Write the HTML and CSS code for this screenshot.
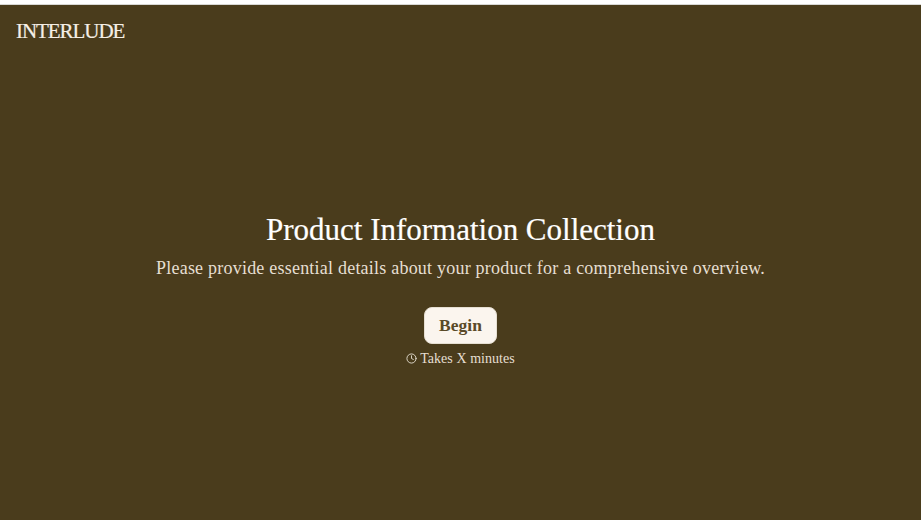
FILE: index.html
```html
<!DOCTYPE html>
<html lang="en">
<head>
<meta charset="utf-8">
<title>Interlude</title>
<link rel="stylesheet" href="styles.css">
</head>
<body>
<div class="page">
  <header class="header"><div class="logo">INTERLUDE</div></header>
  <main class="intro">
    <h1 class="title">Product Information Collection</h1>
    <p class="subtitle">Please provide essential details about your product for a comprehensive overview.</p>
    <button class="begin" type="button">Begin</button>
    <div class="duration">
      <svg class="clock" viewBox="0 0 24 24" fill="none" stroke="currentColor" stroke-width="2" stroke-linecap="round" stroke-linejoin="round"><circle cx="12" cy="12" r="10"/><polyline points="12 6 12 12 16 14"/></svg>
      <span>Takes X minutes</span>
    </div>
  </main>
</div>
</body>
</html>
```

FILE: styles.css
```css
* { box-sizing: border-box; }
html, body { margin: 0; height: 100%; }
body { background: #fff; font-family: "Liberation Serif", "Times New Roman", serif; overflow: hidden; }
.page { margin-top: 4px; height: 516px; background: #4a3c1c; border-top: 1px solid #d8d8d4; display: flex; flex-direction: column; }
.header { padding: 12px 16px 0; height: 50px; }
.logo { color: #f5efe6; font-size: 21px; line-height: 28px; letter-spacing: -1.05px; -webkit-text-stroke: 0.2px #f5efe6; }
.intro { flex: 1; display: flex; flex-direction: column; align-items: center; padding-top: 157px; }
.title { margin: 0; color: #fff; font-size: 31px; line-height: 36px; font-weight: 400; letter-spacing: -0.01px; -webkit-text-stroke: 0.2px #fff; }
.subtitle { margin: 8px 0 0; color: #e6dfd2; font-size: 18px; line-height: 24px; letter-spacing: 0.22px; }
.begin { margin-top: 27px; width: 73px; height: 37px; padding: 0; border: 1px solid #e6dfd2; border-radius: 8px; background: #fbf5ee; color: #5a4a28; font-family: inherit; font-size: 17.5px; font-weight: 700; }
.duration { margin-top: 6px; display: flex; align-items: center; gap: 3px; color: #e6dfd2; font-size: 14px; line-height: 18px; letter-spacing: 0.05px; }
.clock { width: 11px; height: 11px; margin-bottom: 2px; }
```
